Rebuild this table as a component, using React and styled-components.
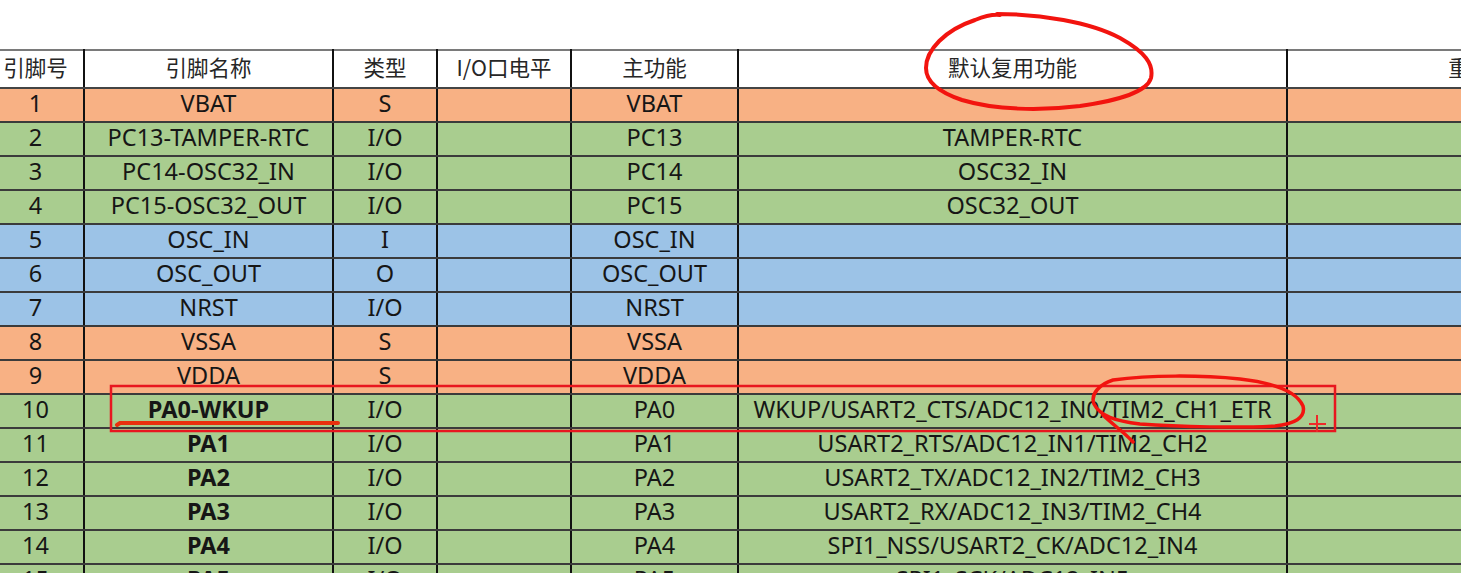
import React from "react";
import styled, { createGlobalStyle } from "styled-components";

const ORANGE = "#f8b184";
const GREEN = "#a9cd8f";
const BLUE = "#9cc3e7";

const columns = [96, 249, 104, 134, 167, 549, 430];
const headers = ["引脚号", "引脚名称", "类型", "I/O口电平", "主功能", "默认复用功能", "重映射功能"];

const rows = [
  { no: 1, name: "VBAT", type: "S", main: "VBAT", alt: "", tone: ORANGE },
  { no: 2, name: "PC13-TAMPER-RTC", type: "I/O", main: "PC13", alt: "TAMPER-RTC", tone: GREEN },
  { no: 3, name: "PC14-OSC32_IN", type: "I/O", main: "PC14", alt: "OSC32_IN", tone: GREEN },
  { no: 4, name: "PC15-OSC32_OUT", type: "I/O", main: "PC15", alt: "OSC32_OUT", tone: GREEN },
  { no: 5, name: "OSC_IN", type: "I", main: "OSC_IN", alt: "", tone: BLUE },
  { no: 6, name: "OSC_OUT", type: "O", main: "OSC_OUT", alt: "", tone: BLUE },
  { no: 7, name: "NRST", type: "I/O", main: "NRST", alt: "", tone: BLUE },
  { no: 8, name: "VSSA", type: "S", main: "VSSA", alt: "", tone: ORANGE },
  { no: 9, name: "VDDA", type: "S", main: "VDDA", alt: "", tone: ORANGE },
  { no: 10, name: "PA0-WKUP", bold: true, type: "I/O", main: "PA0", alt: "WKUP/USART2_CTS/ADC12_IN0/TIM2_CH1_ETR", tone: GREEN },
  { no: 11, name: "PA1", bold: true, type: "I/O", main: "PA1", alt: "USART2_RTS/ADC12_IN1/TIM2_CH2", tone: GREEN },
  { no: 12, name: "PA2", bold: true, type: "I/O", main: "PA2", alt: "USART2_TX/ADC12_IN2/TIM2_CH3", tone: GREEN },
  { no: 13, name: "PA3", bold: true, type: "I/O", main: "PA3", alt: "USART2_RX/ADC12_IN3/TIM2_CH4", tone: GREEN },
  { no: 14, name: "PA4", bold: true, type: "I/O", main: "PA4", alt: "SPI1_NSS/USART2_CK/ADC12_IN4", tone: GREEN },
  { no: 15, name: "PA5", bold: true, type: "I/O", main: "PA5", alt: "SPI1_SCK/ADC12_IN5", tone: GREEN },
];

export default function App() {
  return (
    <>
      <GlobalStyle />
      <Page>
        <Sheet>
          <colgroup>
            {columns.map((w, i) => (
              <col key={i} style={{ width: w }} />
            ))}
          </colgroup>
          <thead>
            <tr>
              {headers.map((h) => (
                <HeadCell key={h}>{h}</HeadCell>
              ))}
            </tr>
          </thead>
          <tbody>
            {rows.map((r) => (
              <Row key={r.no} tone={r.tone}>
                <Cell>{r.no}</Cell>
                <Cell bold={r.bold}>{r.name}</Cell>
                <Cell>{r.type}</Cell>
                <Cell />
                <Cell>{r.main}</Cell>
                <Cell>{r.alt}</Cell>
                <Cell />
              </Row>
            ))}
          </tbody>
        </Sheet>
        <Marks viewBox="0 0 1461 573" width="1461" height="573">
          <path
            d="M997 14 C1040 14 1090 22 1120 38 C1145 52 1154 64 1151 78 C1147 92 1120 100 1080 106 C1040 111 995 110 962 100 C938 92 926 82 926 68 C926 50 945 30 975 20 C985 16 992 14 1000 15"
            fill="none"
            stroke="#f2140f"
            strokeWidth="4"
            strokeLinecap="round"
            strokeLinejoin="round"
          />
          <rect x="111" y="386" width="1224" height="45" fill="none" stroke="#e8171f" strokeWidth="2.5" />
          <path d="M117 425 L120 423 L338 423" fill="none" stroke="#e9300e" strokeWidth="4" strokeLinecap="round" />
          <path
            d="M1113 380 C1150 375 1200 375 1240 379 C1275 383 1297 392 1303 406 C1306 418 1294 424 1275 426 C1240 428 1180 427 1140 424 C1115 421 1100 416 1094 404 C1090 394 1100 384 1113 380 M1103 415 C1112 424 1124 432 1133 442"
            fill="none"
            stroke="#f2140f"
            strokeWidth="3.5"
            strokeLinecap="round"
            strokeLinejoin="round"
          />
          <path d="M1309 424 H1326 M1317 415 V432" stroke="#ee2a2a" strokeWidth="2" />
        </Marks>
      </Page>
    </>
  );
}

////////////////////////// CSS //////////////////////////
const GlobalStyle = createGlobalStyle`
  html, body {
    margin: 0;
    padding: 0;
    background: #fff;
    overflow: hidden;
  }
`;

const Page = styled.div`
  position: relative;
  width: 1461px;
  height: 573px;
  overflow: hidden;
  padding-top: 49px;
  box-sizing: border-box;
  font-family: "Noto Sans", "Noto Sans CJK SC", sans-serif;
  color: #161616;
`;

const Sheet = styled.table`
  table-layout: fixed;
  border-collapse: collapse;
  width: 1729px;
  margin-left: -12px;
`;

const HeadCell = styled.th`
  height: 32px;
  padding: 0 0 4px;
  background: #fff;
  font-family: "Noto Sans CJK SC", sans-serif;
  font-weight: 400;
  font-size: 21.5px;
  line-height: 26px;
  color: #262626;
  text-align: center;
  white-space: nowrap;
  border-top: 2px solid #7a7a7a;
  border-right: 2px solid #111;
  border-bottom: 2px solid #444;
`;

const Row = styled.tr`
  height: 34px;
  background: ${(p) => p.tone};
`;

const Cell = styled.td`
  padding: 0 0 4px;
  font-size: 23.5px;
  font-weight: ${(p) => (p.bold ? 700 : 400)};
  line-height: 26px;
  text-align: center;
  white-space: nowrap;
  overflow: hidden;
  border-right: 2px solid #111;
  border-bottom: 2px solid #3b3b3b;
`;

const Marks = styled.svg`
  position: absolute;
  top: 0;
  left: 0;
  pointer-events: none;
`;
